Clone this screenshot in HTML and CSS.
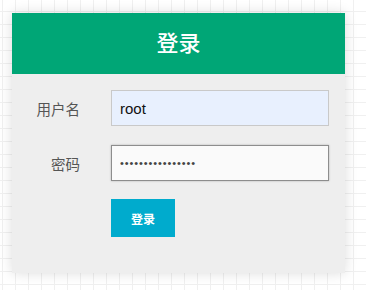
FILE: index.html
```html
<!DOCTYPE html>
<html lang="zh">
<head>
<meta charset="utf-8">
<title>登录</title>
<link rel="stylesheet" href="styles.css">
</head>
<body>
<div class="card">
  <div class="card-header">登录</div>
  <form class="login-form">
    <label class="field-label" for="user">用户名</label>
    <input class="field-input autofill" id="user" type="text" value="root">
    <label class="field-label" for="pass">密码</label>
    <input class="field-input focused" id="pass" type="password" value="1234567890123456">
    <div></div>
    <div class="actions"><button type="button" class="btn">登录</button></div>
  </form>
</div>
</body>
</html>
```
FILE: styles.css
```css
html, body {
  margin: 0;
  padding: 0;
}
body {
  width: 366px;
  height: 290px;
  overflow: hidden;
  background-color: #fff;
  background-image:
    linear-gradient(to right, #f0f0f0 1px, transparent 1px),
    linear-gradient(to bottom, #f0f0f0 1px, transparent 1px);
  background-size: 13px 13px;
  background-position: 2px 11px;
  font-family: "Liberation Sans", "Noto Sans CJK SC", sans-serif;
}
.card {
  margin: 13px 0 0 12px;
  width: 333px;
  height: 260px;
  background: #eeeeee;
  box-shadow: 0 0 12px rgba(0, 0, 0, 0.14);
  display: flex;
  flex-direction: column;
}
.card-header {
  box-sizing: border-box;
  height: 61px;
  padding-bottom: 5px;
  background: #00a676;
  color: #fff;
  font-family: "Noto Sans CJK SC", sans-serif;
  font-size: 22px;
  font-weight: 500;
  display: flex;
  align-items: center;
  justify-content: center;
}
.login-form {
  display: grid;
  grid-template-columns: 68px 218px;
  column-gap: 31px;
  row-gap: 19px;
  padding: 16px 0 0 0;
  align-items: center;
}
.field-label {
  text-align: right;
  font-family: "Noto Sans CJK SC", sans-serif;
  font-size: 14.5px;
  color: #555;
}
.field-input {
  box-sizing: border-box;
  width: 218px;
  height: 36px;
  margin: 0;
  padding: 0 8px;
  font-family: "Liberation Sans", sans-serif;
  font-size: 15px;
  color: #111;
  outline: none;
}
.autofill {
  background: #e8f0fe;
  border: 1px solid #c9c9c9;
}
.focused {
  background: #fafafa;
  border: 1px solid #8d8d8d;
  box-shadow: 0 0 2px rgba(0, 0, 0, 0.25);
  font-size: 11px;
  letter-spacing: 0.9px;
  color: #444;
}
.actions {
  margin-top: -1px;
}
.btn {
  width: 64px;
  height: 38px;
  border: none;
  background: #00abcd;
  color: #fff;
  font-family: "Noto Sans CJK SC", sans-serif;
  font-size: 12px;
  font-weight: 700;
  padding: 0;
  cursor: pointer;
}
```
